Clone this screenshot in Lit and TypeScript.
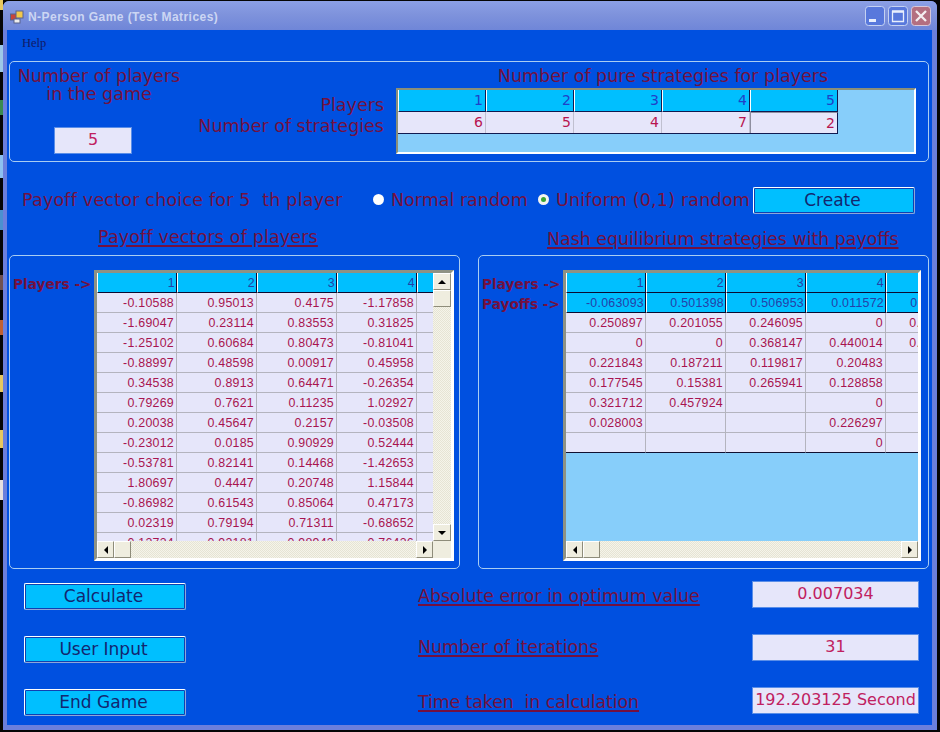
import { LitElement, html, css } from "lit";
import { customElement } from "lit/decorators.js";

const left = [
  ["-0.10588","0.95013","0.4175","-1.17858"],["-1.69047","0.23114","0.83553","0.31825"],
  ["-1.25102","0.60684","0.80473","-0.81041"],["-0.88997","0.48598","0.00917","0.45958"],
  ["0.34538","0.8913","0.64471","-0.26354"],["0.79269","0.7621","0.11235","1.02927"],
  ["0.20038","0.45647","0.2157","-0.03508"],["-0.23012","0.0185","0.90929","0.52444"],
  ["-0.53781","0.82141","0.14468","-1.42653"],["1.80697","0.4447","0.20748","1.15844"],
  ["-0.86982","0.61543","0.85064","0.47173"],["0.02319","0.79194","0.71311","-0.68652"],
  ["0.12734","0.92181","0.98943","0.76436"],
];
const right = [
  ["0.250897","0.201055","0.246095","0","0.123456"],["0","0","0.368147","0.440014","0.123456"],
  ["0.221843","0.187211","0.119817","0.20483",""],["0.177545","0.15381","0.265941","0.128858",""],
  ["0.321712","0.457924","","0",""],["0.028003","","","0.226297",""],["","","","0",""],
];

@customElement("app-root")
export class AppRoot extends LitElement {
  static styles = css`
    :host { display: block; width: 940px; height: 732px; overflow: hidden; font-family: "DejaVu Sans", sans-serif;
      background: linear-gradient(#e8c860 0 10px, #050505 10px 45px, #9cc8e8 45px 72px, #050505 72px 100px, #3a8a50 100px 115px, #050505 115px 155px, #8cc0f0 155px 178px, #050505 178px 210px, #4a90d0 210px 230px, #050505 230px 275px, #705050 275px 290px, #050505 290px 320px, #c06030 320px 335px, #050505 335px 375px, #e8c860 375px 392px, #050505 392px 430px, #e8c860 430px 448px, #050505 448px 480px, #e8e0e0 480px 500px, #050505 500px) 0 0 / 3px 100% no-repeat #050505; }
    .win { margin-left: 3px; margin-top: 1px; width: 934px; height: 729px; display: flex; flex-direction: column; background: #6b7fdc; border-radius: 6px 6px 0 0; box-sizing: border-box; padding: 0 5px 5px 4px; }
    .title { height: 29px; flex: none; margin: 0 -5px 0 -4px; padding: 3px 6px 0 7px; box-sizing: border-box; display: flex; align-items: center; gap: 3px; border-radius: 6px 6px 0 0; background: linear-gradient(#8ba0e6 0%, #7f93dc 45%, #6f86d8 100%); }
    .appicon { width: 14px; height: 14px; flex: none; margin-right: 1px; }
    .title-text { flex: 1; font: bold 12px "Liberation Sans", sans-serif; letter-spacing: 0.45px; color: #ccd6f3; }
    .cap { width: 20px; height: 20px; display: block; flex: none; margin-top: -3px; }
    .client { flex: 1; background: #0050e0; display: flex; flex-direction: column; padding: 0 3px 0 2px; min-height: 0; }
    .menu { height: 31px; flex: none; padding: 3px 0 0 13px; box-sizing: border-box; font: 12.5px/20px "Liberation Serif", serif; color: #101a66; }
    .l { color: #74103f; font-size: 17.5px; line-height: 18px; white-space: nowrap; }
    .group { border: 1px solid #a9cdf2; border-radius: 5px; box-sizing: border-box; }
    .top { height: 101px; flex: none; display: flex; }
    .nplayers { width: 178px; flex: none; display: flex; flex-direction: column; align-items: center; padding-top: 5px; text-align: center; }
    .field { background: #e6e6fa; border: 1px solid #5a8ee8; box-sizing: border-box; color: #c02060; text-align: center; font-size: 16px; height: 27px; line-height: 24px; white-space: nowrap; }
    .nplayers .field { width: 78px; margin-top: 24px; margin-right: 12px; }
    .rowlabels { width: 196px; flex: none; text-align: right; padding-top: 33px; box-sizing: border-box; }
    .rowlabels .l { line-height: 21px; }
    .strat { margin-left: 12px; width: 520px; flex: none; display: flex; flex-direction: column; align-items: center; padding-top: 4px; }
    .strat > .l { line-height: 20px; margin-left: 14px; height: 22px; }
    .sgrid { width: 520px; height: 66px; box-sizing: border-box; border: 2px solid #fff; border-top-color: #8a8f7a; border-left-color: #8a8f7a; background: #87cefa; }
    .srow { display: flex; width: 440px; height: 22px; }
    .srow.v { height: 21px; border-bottom: 1px solid #101a50; }
    .srow span { width: 88px; box-sizing: border-box; text-align: right; padding-right: 2px; font: 14px/21px "DejaVu Sans", sans-serif; }
    .srow.h span { background: #00bfff; color: #2040c8; border-right: 1px solid #101a50; border-left: 1px solid #fff; border-bottom: 1px solid #101a50; }
    .srow.v span { background: #e6e6fa; color: #b81450; border-right: 1px solid #c0c0d0; }
    .srow.v span:last-child { border: 1px solid #8f8f9f; border-right-color: #101a50; border-bottom: 0; }
    .choice { height: 61px; flex: none; display: flex; align-items: center; padding-left: 13px; padding-top: 14px; box-sizing: border-box; }
    .choice .p { width: 351px; flex: none; letter-spacing: 0.2px; }
    .radio { width: 11px; height: 11px; flex: none; border-radius: 50%; background: radial-gradient(circle at 50% 50%, #fff 60%, #d4d8e0); display: flex; align-items: center; justify-content: center; margin-right: 7px; }
    .radio.on { background: #f4f4f0; }
    .radio.on i { display: block; width: 5px; height: 5px; border-radius: 50%; background: #3aa534; }
    .choice .n { width: 147px; flex: none; }
    .choice .u { width: 197px; flex: none; letter-spacing: 0.2px; }
    .btn { width: 162px; height: 27px; flex: none; box-sizing: border-box; padding-right: 3px; background: #00bfff; border: 1px solid #fff; border-right-color: #8fa6d8; border-bottom-color: #8fa6d8; outline: 1px solid #1040b0; outline-offset: -2px; border-radius: 2px; color: #13266f; font-size: 17px; line-height: 25px; text-align: center; white-space: nowrap; }
    .choice .btn { margin-top: 2px; }
    .heads { height: 32px; flex: none; display: flex; }
    .u-l { text-decoration: underline; text-decoration-thickness: 2px; text-underline-offset: 2px; font-size: 17.4px; color: #74103f; white-space: nowrap; }
    .heads .a { margin-left: 89px; width: 449px; flex: none; padding-top: 4px; line-height: 20px; letter-spacing: 0.2px; }
    .heads .b { padding-top: 6px; line-height: 20px; }
    .panes { height: 314px; flex: none; display: flex; justify-content: space-between; }
    .pane { width: 451px; height: 314px; display: flex; padding: 14px 0 0 3px; }
    .tags { width: 81px; flex: none; padding-top: 4px; }
    .tags b { display: block; font: bold 13.7px/20px "DejaVu Sans", sans-serif; color: #74103f; white-space: nowrap; }
    .dg { width: 360px; height: 291px; flex: none; box-sizing: border-box; border: 3px solid #fff; border-top-color: #8e9284; border-left-color: #8e9284; background: #87cefa; display: grid; grid-template-columns: 1fr 18px; grid-template-rows: 1fr 17px; overflow: hidden; }
    .dg.r { grid-template-columns: 1fr; width: 358px; }
    .cells { overflow: hidden; min-width: 0; min-height: 0; }
    .row { display: flex; height: 20px; width: max-content; }
    .row span { width: 80px; height: 20px; flex: none; box-sizing: border-box; padding-right: 2px; text-align: right; font: 12.4px/21px "Liberation Sans", sans-serif; letter-spacing: 0.25px; background: #e6e6fa; color: #a8144f; border-right: 1px solid #b4b4be; border-bottom: 1px solid #b4b4be; white-space: nowrap; overflow: hidden; }
    .row.h span { background: #00bfff; color: #2540a8; border-right: 1px solid #0a0a30; border-left: 1px solid #fff; border-bottom: 1px solid #0a0a30; padding-right: 1px; }
    .row span.end { width: 16px; padding: 0; border-right: 0; }
    .row.last span { border-bottom-color: #101030; }
    .vbar, .hbar { background: repeating-conic-gradient(#f5f4ea 0 25%, #e6e4d4 0 50%) 0 0 / 2px 2px; display: flex; }
    .vbar { flex-direction: column; justify-content: space-between; }
    .hbar { justify-content: space-between; align-items: stretch; }
    .sb { display: flex; align-items: center; justify-content: center; background: #efeddf; border: 1px solid #fff; border-right-color: #8e8c7a; border-bottom-color: #8e8c7a; box-sizing: border-box; flex: none; }
    .vbar .sb { width: 18px; height: 17px; }
    .hbar .sb { width: 17px; }
    .gl { display: flex; }
    .gl.col { flex-direction: column; }
    .tri-u { width: 0; height: 0; border: 4px solid transparent; border-top: 0; border-bottom: 4px solid #000; }
    .tri-d { width: 0; height: 0; border: 4px solid transparent; border-bottom: 0; border-top: 4px solid #000; }
    .tri-l { width: 0; height: 0; border: 4px solid transparent; border-left: 0; border-right: 4px solid #000; }
    .tri-r { width: 0; height: 0; border: 4px solid transparent; border-right: 0; border-left: 4px solid #000; }
    .corner { background: #efeddf; }
    .bottom { flex: 1; display: grid; grid-template-columns: 394px 334px 167px; grid-template-rows: repeat(3, 53px); padding: 14px 0 0 15px; box-sizing: border-box; align-items: start; }
    .bottom .lab { padding-top: 2px; line-height: 22px; }
    .bottom .lab.up { padding-top: 0; }
    .bottom .lab.t { letter-spacing: -0.1px; }
    .bottom .field { margin-top: -2px; }
  `;

  private vbar() {
    return html`<div class="vbar"><div class="gl col"><div class="sb"><i class="tri-u"></i></div><div class="sb"></div></div><div class="sb"><i class="tri-d"></i></div></div>`;
  }
  private hbar() {
    return html`<div class="hbar"><div class="gl"><div class="sb"><i class="tri-l"></i></div><div class="sb"></div></div><div class="sb"><i class="tri-r"></i></div></div>`;
  }

  render() {
    return html`<div class="win">
      <div class="title">
        <svg class="appicon" viewBox="0 0 14 14"><rect x="0.5" y="4" width="6" height="6" fill="#c8443a" stroke="#59628c"/><rect x="6" y="1" width="7" height="7" fill="#f2c84a" stroke="#59628c"/><rect x="4" y="9" width="6" height="4" fill="#eee" stroke="#59628c"/></svg>
        <div class="title-text">N-Person Game (Test Matrices)</div>
        <svg class="cap" viewBox="0 0 20 20"><rect x=".5" y=".5" width="19" height="19" rx="3" fill="#5878dc" stroke="#c5d2f2"/><rect x="4" y="13" width="7" height="3" fill="#e8eefc"/></svg>
        <svg class="cap" viewBox="0 0 20 20"><rect x=".5" y=".5" width="19" height="19" rx="3" fill="#5878dc" stroke="#c5d2f2"/><path d="M4.5 5.5h11v10h-11z" fill="none" stroke="#e8eefc" stroke-width="1.3"/><path d="M4 5.5h12" stroke="#e8eefc" stroke-width="2.4"/></svg>
        <svg class="cap" viewBox="0 0 20 20"><rect x=".5" y=".5" width="19" height="19" rx="3" fill="#b46f80" stroke="#d8c8d8"/><path d="M5 5l10 10M15 5L5 15" stroke="#f4eef0" stroke-width="2.3"/></svg>
      </div>
      <div class="client">
        <div class="menu">Help</div>
        <div class="group top">
          <div class="nplayers"><div class="l">Number of players<br>in the game</div><div class="field">5</div></div>
          <div class="rowlabels"><div class="l">Players</div><div class="l">Number of strategies</div></div>
          <div class="strat">
            <div class="l">Number of pure strategies for players</div>
            <div class="sgrid">
              <div class="srow h">${[1,2,3,4,5].map(n => html`<span>${n}</span>`)}</div>
              <div class="srow v">${[6,5,4,7,2].map(n => html`<span>${n}</span>`)}</div>
            </div>
          </div>
        </div>
        <div class="choice">
          <div class="l p">Payoff vector choice for 5&nbsp; th player</div>
          <div class="radio"></div><div class="l n">Normal random</div>
          <div class="radio on"><i></i></div><div class="l u">Uniform (0,1) random</div>
          <div class="btn">Create</div>
        </div>
        <div class="heads"><div class="u-l a">Payoff vectors of players</div><div class="u-l b">Nash equilibrium strategies with payoffs</div></div>
        <div class="panes">
          <div class="group pane">
            <div class="tags"><b>Players -&gt;</b></div>
            <div class="dg">
              <div class="cells">
                <div class="row h">${[1,2,3,4].map(n => html`<span>${n}</span>`)}<span class="end"></span></div>
                ${left.map(r => html`<div class="row">${r.map(c => html`<span>${c}</span>`)}<span class="end"></span></div>`)}
              </div>
              ${this.vbar()}${this.hbar()}<div class="corner"></div>
            </div>
          </div>
          <div class="group pane">
            <div class="tags"><b>Players -&gt;</b><b>Payoffs -&gt;</b></div>
            <div class="dg r">
              <div class="cells">
                <div class="row h">${[1,2,3,4,5].map(n => html`<span>${n}</span>`)}</div>
                <div class="row h">${["-0.063093","0.501398","0.506953","0.011572","0.123456"].map(c => html`<span>${c}</span>`)}</div>
                ${right.map((r, i) => html`<div class="row ${i === right.length - 1 ? "last" : ""}">${r.map(c => html`<span>${c}</span>`)}</div>`)}
              </div>
              ${this.hbar()}
            </div>
          </div>
        </div>
        <div class="bottom">
          <div class="btn">Calculate</div><div class="u-l lab">Absolute error in optimum value</div><div class="field">0.007034</div>
          <div class="btn">User Input</div><div class="u-l lab up">Number of iterations</div><div class="field">31</div>
          <div class="btn">End Game</div><div class="u-l lab t">Time taken&nbsp; in calculation</div><div class="field">192.203125 Second</div>
        </div>
      </div>
    </div>`;
  }
}
